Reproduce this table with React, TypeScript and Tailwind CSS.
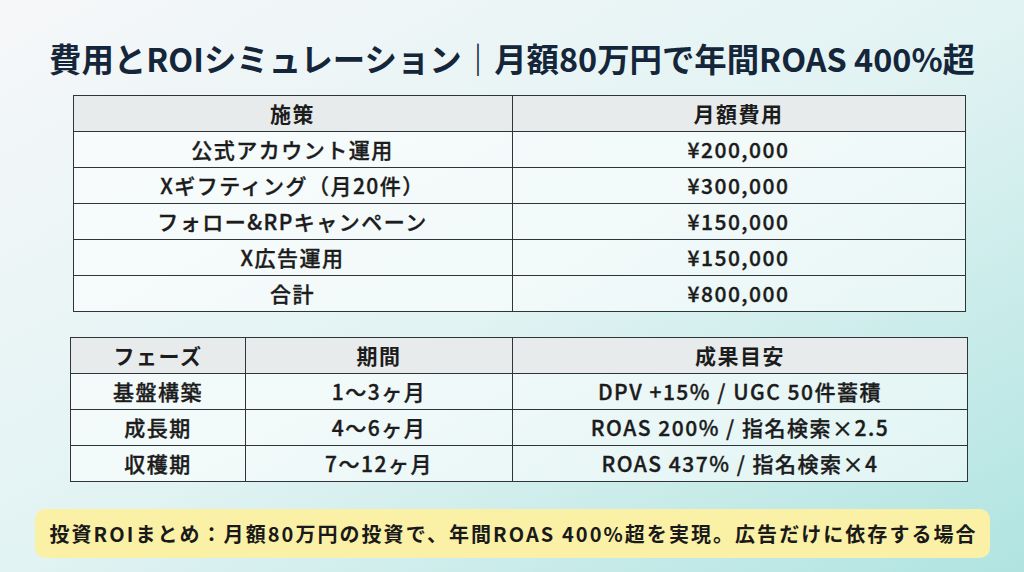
const costRows = [
  { name: '公式アカウント運用', cost: '¥200,000' },
  { name: 'Xギフティング（月20件）', cost: '¥300,000' },
  { name: 'フォロー&RPキャンペーン', cost: '¥150,000' },
  { name: 'X広告運用', cost: '¥150,000' },
  { name: '合計', cost: '¥800,000' }
];

const phaseRows = [
  { phase: '基盤構築', period: '1〜3ヶ月', goal: 'DPV +15% / UGC 50件蓄積' },
  { phase: '成長期', period: '4〜6ヶ月', goal: 'ROAS 200% / 指名検索×2.5' },
  { phase: '収穫期', period: '7〜12ヶ月', goal: 'ROAS 437% / 指名検索×4' }
];

const th = 'h-[36px] border-[1.5px] border-[#2f3438] bg-[#e8ebec] text-center font-bold';
const td = 'h-[36px] border-[1.5px] border-[#2f3438] bg-white/55 text-center font-medium [-webkit-text-stroke:0.35px_#1c1c1c]';

const App = () => {
  return <div className="flex h-[572px] w-full flex-col items-center overflow-hidden bg-linear-to-br from-[#f6f7f9] via-[#e2f3f3] to-[#b0e4e1] text-[#1c1c1c]" style={{
    fontFamily: '"Noto Sans CJK JP", "Noto Sans", sans-serif'
  }}>
      <h1 className="mt-[38px] text-[32.4px] leading-[40px] font-bold text-[#15263a]">
        費用とROIシミュレーション｜月額80万円で年間ROAS 400%超
      </h1>

      <table className="mt-[17px] ml-[14px] w-[893px] border-collapse text-[21px] tracking-[1.5px]">
        <colgroup>
          <col className="w-[439px]" />
          <col />
        </colgroup>
        <thead>
          <tr>
            <th className={th}>施策</th>
            <th className={th}>月額費用</th>
          </tr>
        </thead>
        <tbody>
          {costRows.map(row => <tr key={row.name}>
              <td className={td}>{row.name}</td>
              <td className={td}>{row.cost}</td>
            </tr>)}
        </tbody>
      </table>

      <table className="mt-[25px] ml-[14px] w-[898px] border-collapse text-[21px] tracking-[1.5px]">
        <colgroup>
          <col className="w-[175px]" />
          <col className="w-[267px]" />
          <col />
        </colgroup>
        <thead>
          <tr>
            <th className={th}>フェーズ</th>
            <th className={th}>期間</th>
            <th className={th}>成果目安</th>
          </tr>
        </thead>
        <tbody>
          {phaseRows.map(row => <tr key={row.phase}>
              <td className={td}>{row.phase}</td>
              <td className={td}>{row.period}</td>
              <td className={td}>{row.goal}</td>
            </tr>)}
        </tbody>
      </table>

      <div className="mt-[27px] flex h-[49px] w-[955px] items-center rounded-[10px] bg-[#fbf1a6] px-[15px]">
        <p className="text-[20px] leading-none font-bold tracking-[2.05px] whitespace-nowrap text-[#1a1a1a]">
          投資ROIまとめ：月額80万円の投資で、年間ROAS 400%超を実現。広告だけに依存する場合
        </p>
      </div>
    </div>;
};

export default App;
